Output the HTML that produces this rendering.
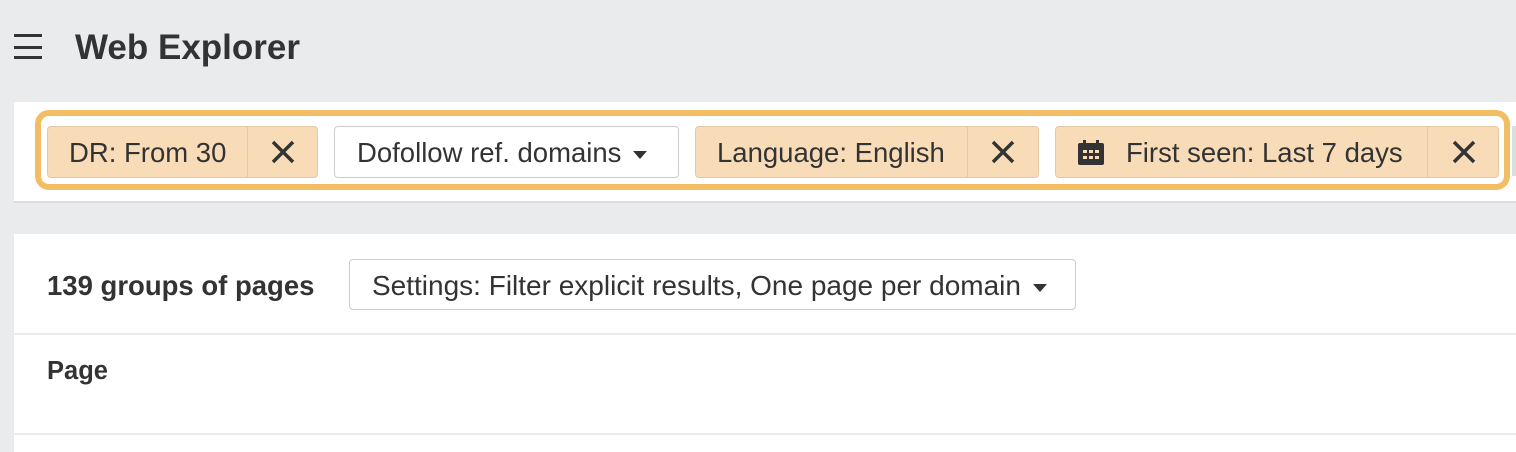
<!DOCTYPE html>
<html><head><style>
body{margin:0;width:1516px;height:452px;background:#eaebed;font-family:"Liberation Sans",Arial,sans-serif;color:#333;position:relative;overflow:hidden}
.abs{position:absolute}
.ham{left:14px;width:28px;height:3px;background:#333}
.title{left:75px;top:28px;font-size:35px;font-weight:bold;color:#333;line-height:40px}
.p1{left:14px;top:102px;width:1502px;height:99px;background:#fff;border-bottom:2px solid #dcdde0}
.ob{left:35px;top:110px;width:1463px;height:68px;border:6px solid #f3bd63;border-radius:14px}
.chip{top:126px;height:50px;border:1px solid #e3c9a4;background:#f7dcb7;border-radius:4px;font-size:27.5px;line-height:52px;box-sizing:content-box}
.chip span{position:absolute;top:0;white-space:nowrap}
.div{position:absolute;top:0;width:1px;height:50px;background:#e3c9a4}
.x{position:absolute;top:13px}
.btn{border:1px solid #ccc;background:#fff;border-radius:4px;font-size:27.5px;white-space:nowrap}
.tri{display:inline-block;width:0;height:0;border-left:7px solid transparent;border-right:7px solid transparent;border-top:8px solid #333;vertical-align:middle}
.p2{left:14px;top:234px;width:1502px;height:218px;background:#fff}
.line{left:14px;width:1502px;height:2px;background:#eaebed}
</style></head><body>
<div class="abs ham" style="top:34px"></div>
<div class="abs ham" style="top:46px"></div>
<div class="abs ham" style="top:56px"></div>
<div class="abs title">Web Explorer</div>
<div class="abs p1"></div>
<div class="abs ob"></div>

<div class="abs chip" style="left:47px;width:269px"><span style="left:21px">DR: From 30</span><div class="div" style="left:199px"></div>
<svg class="x" style="left:223px" width="24" height="24" viewBox="0 0 24 24"><path d="M2 2L22 22M22 2L2 22" stroke="#333" stroke-width="3.5"/></svg></div>

<div class="abs btn" style="left:334px;top:126px;width:343px;height:50px;line-height:52px"><span style="margin-left:22px">Dofollow ref. domains</span><span class="tri" style="margin-left:12px"></span></div>

<div class="abs chip" style="left:695px;width:342px"><span style="left:21px">Language: English</span><div class="div" style="left:271px"></div>
<svg class="x" style="left:295px" width="24" height="24" viewBox="0 0 24 24"><path d="M2 2L22 22M22 2L2 22" stroke="#333" stroke-width="3.5"/></svg></div>

<div class="abs chip" style="left:1055px;width:442px">
<svg style="position:absolute;left:21px;top:13px" width="28" height="26" viewBox="0 0 28 26"><rect x="1" y="3" width="26" height="22" rx="2" fill="#333"/><rect x="6" y="0" width="3" height="5" fill="#333"/><rect x="19" y="0" width="3" height="5" fill="#333"/><g fill="#f7dcb7"><rect x="6" y="10" width="4" height="3"/><rect x="12" y="10" width="4" height="3"/><rect x="18" y="10" width="4" height="3"/><rect x="6" y="16" width="4" height="3"/><rect x="12" y="16" width="4" height="3"/><rect x="18" y="16" width="4" height="3"/></g></svg>
<span style="left:70px">First seen: Last 7 days</span><div class="div" style="left:371px"></div>
<svg class="x" style="left:396px" width="24" height="24" viewBox="0 0 24 24"><path d="M2 2L22 22M22 2L2 22" stroke="#333" stroke-width="3.5"/></svg></div>
<div class="abs" style="left:1512px;top:126px;width:4px;height:50px;background:#ddd"></div>

<div class="abs p2"></div>
<div class="abs" style="left:47px;top:270px;font-size:27.5px;font-weight:bold;white-space:nowrap">139 groups of pages</div>
<div class="abs btn" style="left:349px;top:259px;width:725px;height:49px;line-height:51px"><span style="margin-left:22px;font-size:28px">Settings: Filter explicit results, One page per domain</span><span class="tri" style="margin-left:12px"></span></div>
<div class="abs line" style="top:333px"></div>
<div class="abs" style="left:47px;top:357px;font-size:25.5px;font-weight:bold">Page</div>
<div class="abs line" style="top:433px"></div>
</body></html>
